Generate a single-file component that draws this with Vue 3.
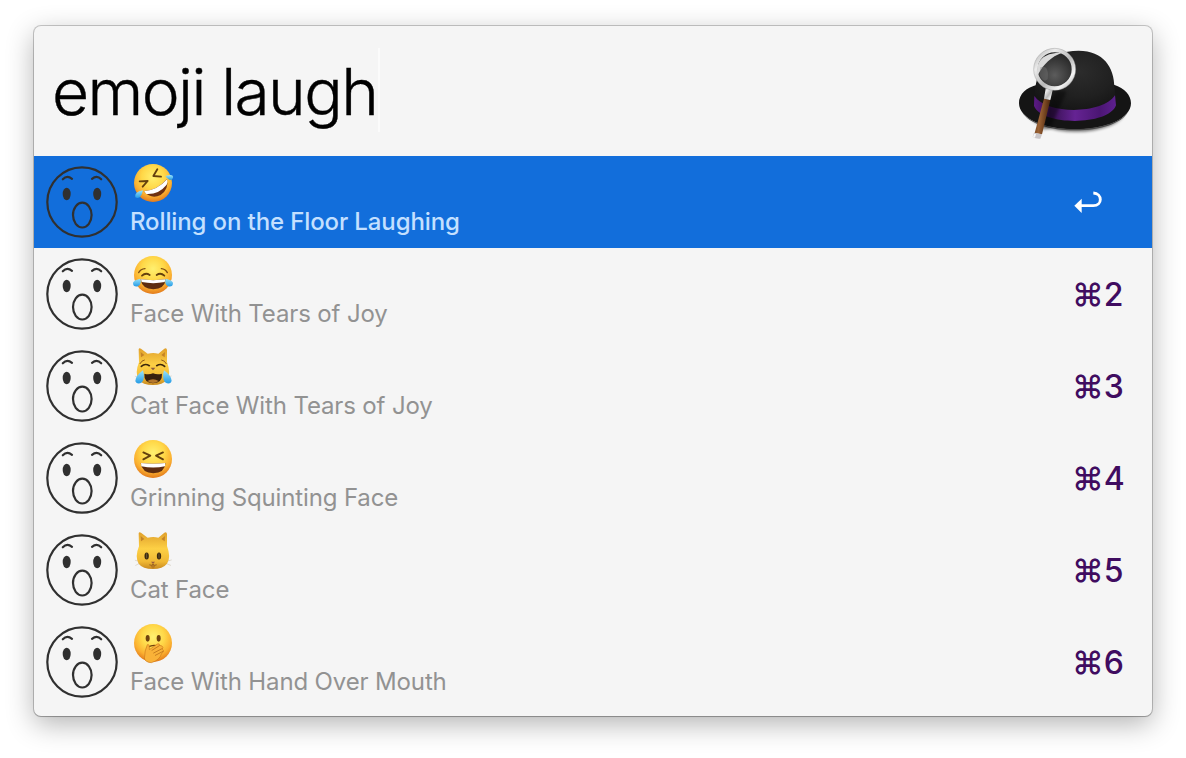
<script setup>
const results = [
  { kind: 'rofl', name: 'Rolling on the Floor Laughing', selected: true },
  { kind: 'joy', name: 'Face With Tears of Joy', key: 2 },
  { kind: 'catjoy', name: 'Cat Face With Tears of Joy', key: 3 },
  { kind: 'squint', name: 'Grinning Squinting Face', key: 4 },
  { kind: 'cat', name: 'Cat Face', key: 5 },
  { kind: 'hand', name: 'Face With Hand Over Mouth', key: 6 },
]
</script>

<template>
  <main class="desktop">
    <section class="panel">
      <header class="search">
        <div class="query">emoji laugh</div>
        <span class="caret"></span>
        <svg class="hat" viewBox="45 75 360 290">
          <defs>
            <radialGradient id="dome" cx=".55" cy=".35" r=".7">
              <stop offset="0" stop-color="#2c2c2c" /><stop offset=".6" stop-color="#202020" /><stop offset="1" stop-color="#141414" />
            </radialGradient>
            <linearGradient id="band" x1="0" x2="1">
              <stop offset="0" stop-color="#5c1a86" /><stop offset=".2" stop-color="#35104f" /><stop offset=".5" stop-color="#652393" /><stop offset=".8" stop-color="#4b1673" /><stop offset="1" stop-color="#5e2090" />
            </linearGradient>
            <linearGradient id="steel" x1="0" y1="0" x2="1" y2="1">
              <stop offset="0" stop-color="#b5b5b5" /><stop offset=".25" stop-color="#ececec" /><stop offset=".55" stop-color="#b8b8b8" /><stop offset=".8" stop-color="#f4f4f4" /><stop offset="1" stop-color="#a4a4a4" />
            </linearGradient>
            <radialGradient id="glass" cx=".5" cy=".65" r=".6">
              <stop offset="0" stop-color="#5c5c5c" /><stop offset=".6" stop-color="#3a3a3a" /><stop offset="1" stop-color="#242424" />
            </radialGradient>
            <linearGradient id="wood" x1="0" x2="1" y1="0" y2=".2">
              <stop offset="0" stop-color="#6b3d1c" /><stop offset=".4" stop-color="#9c6335" /><stop offset="1" stop-color="#4a240b" />
            </linearGradient>
            <filter id="soft" x="-20%" y="-40%" width="140%" height="180%"><feGaussianBlur stdDeviation="4" /></filter>
          </defs>
          <ellipse cx="228" cy="275" rx="145" ry="60" fill="#000" opacity=".55" filter="url(#soft)" />
          <path d="M57 250C56 222 80 202 112 194L342 194C374 204 393 225 393 250C393 296 318 328 225 328C132 328 57 296 57 250Z" fill="#151515" />
          <path d="M66 276C90 309 150 327 225 327C300 327 362 307 385 276C362 312 300 331 225 331C150 331 88 312 66 276Z" fill="#4a4a4a" />
          <path d="M104 238C104 150 140 92 236 92C310 92 343 142 343 202L348 238C330 284 130 286 104 238Z" fill="url(#dome)" />
          <path d="M103 228C140 284 306 284 345 226L348 256C326 318 126 318 102 258Z" fill="url(#band)" />
          <path d="M170 210L150 240L124 330L150 326L200 215Z" fill="#000" opacity=".4" filter="url(#soft)" />
          <path d="M132 236L151 240L126 343L104 339Z" fill="url(#wood)" />
          <path d="M102 338L126 343L121 356Q109 358 98 350Z" fill="#c9c5c8" />
          <path d="M102 341L108 342L105 353L99 350Z" fill="#f8f8f8" />
          <path d="M137 205L158 210L151 240L132 236Z" fill="url(#steel)" />
          <circle cx="164" cy="148" r="58" fill="url(#glass)" />
          <path d="M114 164C104 122 134 96 186 98C154 110 130 132 114 164Z" fill="#dadada" />
          <path d="M121 142Q148 133 143 178Q130 190 118 165Z" fill="#777" opacity=".4" />
          <circle cx="164" cy="148" r="57" fill="none" stroke="url(#steel)" stroke-width="12" />
          <circle cx="164" cy="148" r="63" fill="none" stroke="#8f8f8f" stroke-width="1.200" />
        </svg>
      </header>

      <ul class="results">
        <li v-for="r in results" :key="r.kind" class="row" :class="{ selected: r.selected }">
          <svg class="face" viewBox="10 10 72 72" fill="none" stroke="#303030" stroke-width="2.200" stroke-linecap="round">
            <circle cx="46" cy="46" r="34.700" />
            <ellipse cx="30.700" cy="38" rx="4" ry="6.200" fill="#303030" stroke="none" />
            <ellipse cx="61.200" cy="38" rx="4" ry="6.200" fill="#303030" stroke="none" />
            <ellipse cx="46.300" cy="59.100" rx="9.300" ry="12.400" />
            <path d="M26.800 23.300Q31 18.800 36 22.800M56 22.800Q61 18.800 65.200 23.300" />
          </svg>
          <div class="info">
            <svg class="emoji" viewBox="285 15 132 132" stroke-linecap="round" stroke-linejoin="round">
              <defs>
                <radialGradient :id="'skin-' + r.kind" cx=".5" cy=".34" r=".66">
                  <stop offset="0" stop-color="#fff070" /><stop offset=".45" stop-color="#ffd848" /><stop offset=".76" stop-color="#fbb030" /><stop offset="1" stop-color="#e27a1c" />
                </radialGradient>
                <linearGradient :id="'fur-' + r.kind" x1="0" x2="0" y1="0" y2="1">
                  <stop offset="0" stop-color="#e0a02c" /><stop offset=".45" stop-color="#fdd045" /><stop offset=".8" stop-color="#f0b834" /><stop offset="1" stop-color="#c98a20" />
                </linearGradient>
                <linearGradient :id="'tear-' + r.kind" x1="0" x2="0" y1="0" y2="1">
                  <stop offset="0" stop-color="#9be4fb" /><stop offset="1" stop-color="#249be6" />
                </linearGradient>
              </defs>

              <circle v-if="!r.kind.startsWith('cat')" cx="351" cy="81" r="57" :fill="`url(#skin-${r.kind})`" />

              <g v-if="r.kind === 'rofl'">
                <path d="M311 76L335 75L320 92M364 40L352 60L375 62" fill="none" stroke="#65400d" stroke-width="5.500" />
                <path d="M323 106Q365 102 393 69Q399 100 374 117Q346 131 323 106Z" fill="#6e3110" />
                <path d="M324 106Q365 102 393 70Q396 78 392 86Q368 116 331 114Z" fill="#fff" />
                <path d="M321 103Q314 133 298 124Q294 108 321 103Z" :fill="`url(#tear-${r.kind})`" />
                <path d="M388 60Q414 52 411 66Q404 80 388 60Z" :fill="`url(#tear-${r.kind})`" />
              </g>

              <g v-else-if="r.kind === 'joy'">
                <path d="M308 74Q314 63 327 62M376 62Q388 63 394 74" fill="none" stroke="#7f4e14" stroke-width="4" />
                <path d="M318 83Q329 73 341 81M362 81Q374 73 385 83" fill="none" stroke="#65400d" stroke-width="5.500" />
                <path d="M314 94Q352 99 389 94Q386 123 352 124Q318 123 314 94Z" fill="#5e2d10" />
                <path d="M315 94Q352 99 388 94L386 102Q352 109 317 102Z" fill="#fff" />
                <path d="M313 92Q318 108 306 115Q291 118 291 104Q295 95 313 92ZM389 92Q384 108 396 115Q411 118 411 104Q407 95 389 92Z" :fill="`url(#tear-${r.kind})`" />
              </g>

              <g v-else-if="r.kind === 'squint'">
                <path d="M322 61L343 71L322 82M381 61L360 71L381 82" fill="none" stroke="#65400d" stroke-width="5.500" />
                <path d="M314 93Q352 98 389 93Q386 123 352 124Q318 123 314 93Z" fill="#5e2d10" />
                <path d="M315 93Q352 98 388 93L387 103Q352 110 316 103Z" fill="#fff" />
              </g>

              <g v-else-if="r.kind === 'hand'">
                <ellipse cx="335" cy="67" rx="6" ry="10" fill="#70420e" />
                <ellipse cx="368" cy="67" rx="6" ry="10" fill="#70420e" />
                <path d="M336 93Q351 85 366 90" fill="none" stroke="#70420e" stroke-width="4" />
                <path d="M325 128Q326 102 334 86Q341 82 340 101L364 84Q371 81 371 88L378 90Q383 94 379 99L383 105Q382 110 377 112Q371 133 346 140Q329 139 325 128Z" fill="#f9b238" stroke="#cf7a1c" stroke-width="2" />
                <path d="M348 103L370 89M353 111L378 98M358 118L381 106" fill="none" stroke="#bd721b" stroke-width="2.500" />
              </g>

              <g v-else>
                <path d="M309 112L298 109M309 119L299 124M392 112L406 108M392 119L404 124" stroke="#d2cabb" stroke-width="2" />
                <path d="M308 28Q309 22 315 26L335 41Q352 37 367 41L385 26Q392 22 393 30L393 66Q406 101 393 119Q380 135 351 135Q320 135 308 119Q296 98 309 67Z" :fill="`url(#fur-${r.kind})`" />
                <path d="M314 36L315 52L325 45ZM387 36L386 52L376 45Z" fill="#c48327" />
                <template v-if="r.kind === 'cat'">
                  <ellipse cx="332" cy="96" rx="6.500" ry="10.500" fill="#3a280e" />
                  <ellipse cx="369" cy="96" rx="6.500" ry="10.500" fill="#3a280e" />
                  <path d="M332 89V102M369 89V102" stroke="#8a7145" stroke-width="2" />
                  <ellipse cx="351" cy="127" rx="6" ry="5" fill="#b87a24" />
                  <path d="M345 113H357L351 120Z" fill="#9a5c3c" />
                  <path d="M341 123Q347 126 351 121Q355 126 361 123" fill="none" stroke="#8a541c" stroke-width="2.500" />
                </template>
                <template v-else>
                  <path d="M312 71Q317 61 325 60M377 60Q386 61 391 71" fill="none" stroke="#8e591b" stroke-width="3" />
                  <path d="M316 79Q327 69 340 77M362 77Q375 69 386 79" fill="none" stroke="#3b250c" stroke-width="5" />
                  <path d="M325 101Q338 105 351 100Q364 105 378 101Q380 128 351 130Q323 128 325 101Z" fill="#37200f" />
                  <path d="M334 123Q351 113 368 123Q360 129 351 129Q342 129 334 123Z" fill="#b4772c" />
                  <path d="M344 83H358L351 91Z" fill="#8b5940" />
                  <path d="M321 91Q328 115 318 127Q303 136 298 123Q298 108 321 91ZM384 91Q377 115 387 127Q402 136 407 123Q407 108 384 91Z" :fill="`url(#tear-${r.kind})`" />
                </template>
              </g>
            </svg>
            <div class="name">{{ r.name }}</div>
          </div>
          <svg v-if="r.selected" class="return" viewBox="100 60 92 75">
            <path d="M161 69C189 70 189 107 161 107H124" fill="none" stroke="#fff" stroke-width="8.500" />
            <path d="M104 107L126 86V129Z" fill="#fff" />
          </svg>
          <div v-else class="shortcut"><span class="cmd">⌘</span><span>{{ r.key }}</span></div>
        </li>
      </ul>
    </section>
  </main>
</template>

<style>
body { background: #fff; }
</style>

<style scoped>
.desktop {
  box-sizing: border-box;
  height: 758px;
  padding: 26px 34px 42px;
  overflow: hidden;
  font-family: Inter, "Liberation Sans", sans-serif;
}
.panel {
  height: 690px;
  border-radius: 7px;
  background: #f5f5f5;
  box-shadow: 0 0 0 1px rgba(0, 0, 0, .2), 0 1px 1px rgba(0, 0, 0, .15), 0 8px 28px rgba(0, 0, 0, .3);
}
.search {
  box-sizing: border-box;
  display: flex;
  align-items: flex-start;
  height: 130px;
  padding: 0 17px 0 18px;
}
.query {
  width: 325px;
  margin-top: 26px;
  font-size: 64px;
  line-height: 80px;
  font-weight: 340;
  letter-spacing: -1.600px;
  white-space: nowrap;
  color: #000;
  -webkit-text-stroke: .4px #000;
}
.caret { width: 2px; height: 84px; margin: 22px 0 0 1px; background: #fbfbfb; }
.hat { width: 120px; height: 96.670px; margin: 19px 0 0 auto; }
.results { margin: 0; padding: 0; list-style: none; }
.row { box-sizing: border-box; display: flex; height: 92px; padding: 0 31px 0 12px; }
.selected { background: #126edb; }
.face { flex: none; width: 72px; height: 72px; margin-top: 10px; }
.info { display: flex; flex-direction: column; margin-left: 12px; }
.emoji { display: block; width: 44px; height: 44px; margin: 5px 0 0 1px; }
.name {
  margin-top: 2px;
  font-size: 24px;
  line-height: 30px;
  letter-spacing: -.140px;
  white-space: nowrap;
  color: #929292;
}
.selected .name { font-weight: 500; letter-spacing: -.120px; color: #c4e0ff; }
.return { width: 30.670px; height: 25px; margin: 34px 17px 0 auto; }
.shortcut {
  display: flex;
  justify-content: space-between;
  width: 49px;
  margin: 27px 0 0 auto;
  font-size: 32px;
  line-height: 40px;
  font-weight: 450;
  color: #400c60;
}
</style>
